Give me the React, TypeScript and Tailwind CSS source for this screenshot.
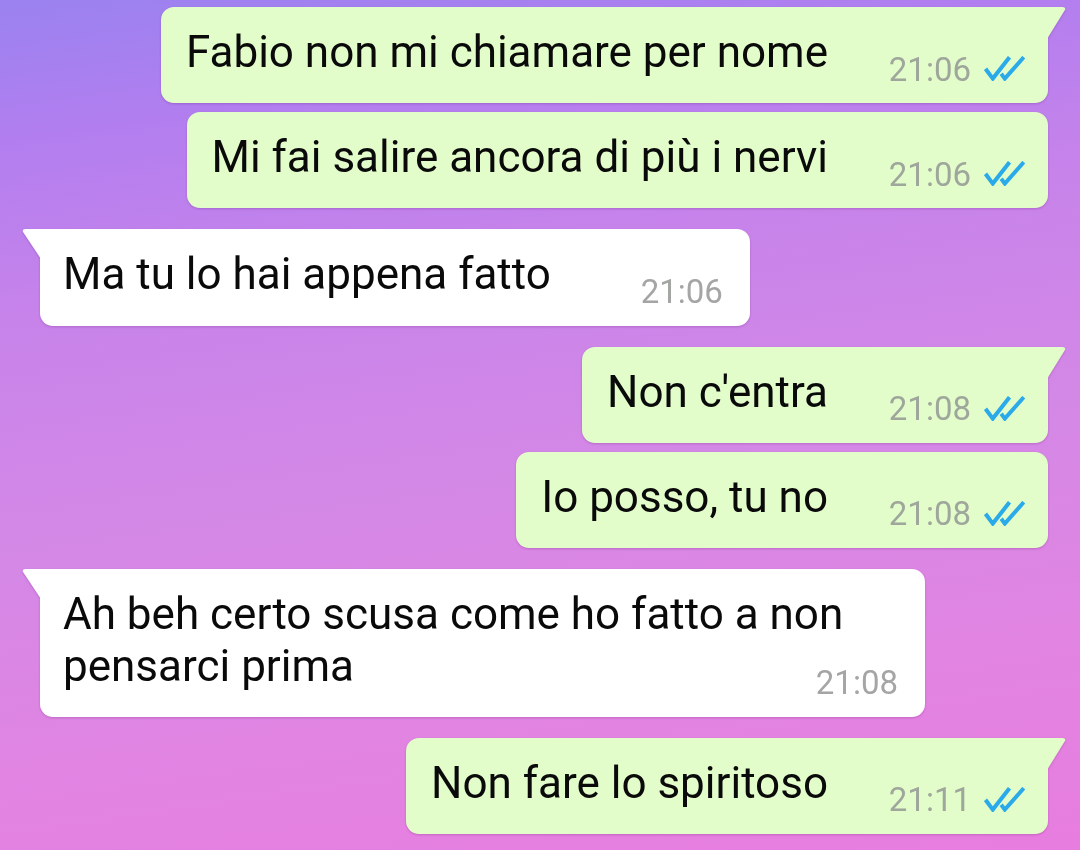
import React from "react";

type Msg = {
  out: boolean;
  tail: boolean;
  text: string;
  time: string;
  mt: string;
};

const msgs: Msg[] = [
  { out: true, tail: true, text: "Fabio non mi chiamare per nome", time: "21:06", mt: "mt-0" },
  { out: true, tail: false, text: "Mi fai salire ancora di più i nervi", time: "21:06", mt: "mt-[9px]" },
  { out: false, tail: true, text: "Ma tu lo hai appena fatto", time: "21:06", mt: "mt-[21px]" },
  { out: true, tail: true, text: "Non c'entra", time: "21:08", mt: "mt-[21px]" },
  { out: true, tail: false, text: "Io posso, tu no", time: "21:08", mt: "mt-[9px]" },
  { out: false, tail: true, text: "Ah beh certo scusa come ho fatto a non pensarci prima", time: "21:08", mt: "mt-[21px]" },
  { out: true, tail: true, text: "Non fare lo spiritoso", time: "21:11", mt: "mt-[21px]" },
];

function Ticks() {
  return (
    <svg
      width="41"
      height="25"
      viewBox="0 0 41 25"
      className="ml-[13px] mb-[8px] shrink-0"
      fill="none"
      stroke="#2aaae9"
      strokeWidth="4"
      strokeLinecap="butt"
      strokeLinejoin="miter"
    >
      <path d="M1.5 12.8 L8.8 22.6 L25.5 1.2" />
      <path d="M17.2 17.8 L20.8 22.6 L39.8 1.2" />
    </svg>
  );
}

function Bubble({ m }: { m: Msg }) {
  const out = m.out;
  const shape = out
    ? m.tail
      ? "rounded-tl-[13px] rounded-bl-[13px] rounded-br-[13px]"
      : "rounded-[13px]"
    : m.tail
    ? "rounded-tr-[13px] rounded-bl-[13px] rounded-br-[13px]"
    : "rounded-[13px]";
  return (
    <div className={`flex ${out ? "justify-end" : "justify-start"} ${m.mt}`}>
      <div className="relative drop-shadow-[0_1px_1px_rgba(80,0,90,0.22)]">
        {m.tail && out && (
          <svg className="absolute top-0 right-[-19px]" width="20" height="32" viewBox="0 0 20 32">
            <path d="M0 0 H15.5 Q19.6 0 17.6 3.6 L0 32 Z" fill="#e2fdca" />
          </svg>
        )}
        {m.tail && !out && (
          <svg className="absolute top-0 left-[-19px]" width="20" height="30" viewBox="0 0 20 30">
            <path d="M20 0 H4.5 Q0.4 0 2.4 3.6 L20 30 Z" fill="#ffffff" />
          </svg>
        )}
        <div
          className={`flex flex-col pt-[20px] pb-[14px] ${shape} ${
            out
              ? "bg-[#e2fdca] pl-[25px] pr-[23px] max-w-[900px]"
              : "bg-white pl-[23px] pr-[27px] max-w-[885px]"
          }`}
        >
          <div className="text-[44px] leading-[51.5px] text-[#0a0a0a]">
            {m.text}
            <span className={`inline-block ${out ? "w-[197px]" : "w-[172px]"}`} />
          </div>
          <div className="-mt-[28px] self-end flex items-end">
            <span
              className={`text-[33px] leading-[38.7px] ${out ? "text-[#9fa69b]" : "text-[#a4a6a4]"}`}
            >
              {m.time}
            </span>
            {out && <Ticks />}
          </div>
        </div>
      </div>
    </div>
  );
}

export default function App() {
  return (
    <div
      className="w-[1080px] h-[850px] overflow-hidden flex flex-col pt-[7px] pl-[40px] pr-[32px] bg-[linear-gradient(172deg,#9a82ef_0%,#b27eef_14%,#c783ea_32%,#d488e6_55%,#e184e2_78%,#e77ddf_100%)]"
      style={{ fontFamily: "Roboto, 'Noto Sans', sans-serif" }}
    >
      {msgs.map((m, i) => (
        <Bubble key={i} m={m} />
      ))}
    </div>
  );
}
